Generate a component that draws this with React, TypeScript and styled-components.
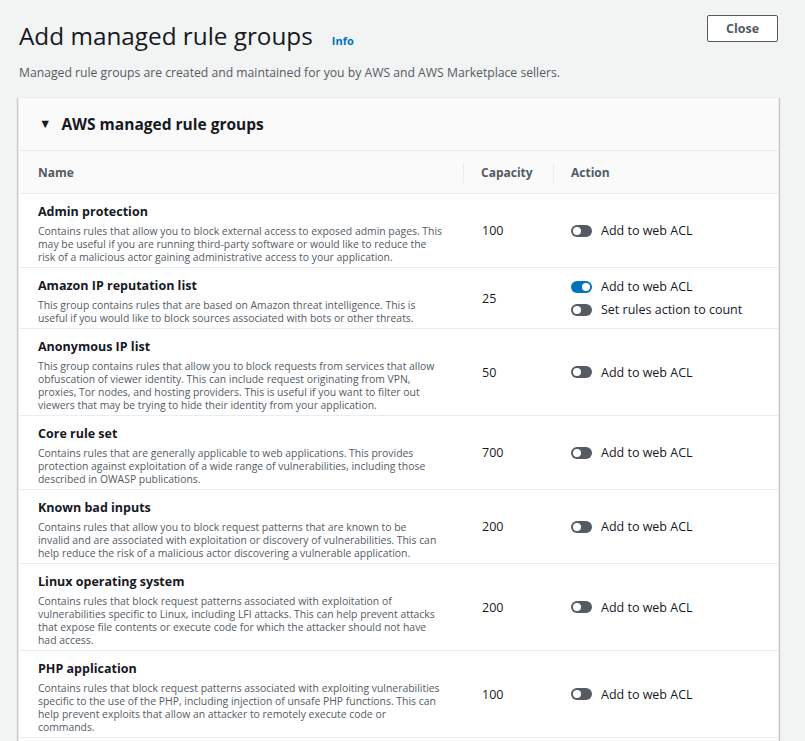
import React from "react";
import styled, { createGlobalStyle } from "styled-components";

const GlobalStyle = createGlobalStyle`
  html, body {
    margin: 0;
    padding: 0;
    background: #f2f3f3;
    font-family: "Open Sans", "Noto Sans", Arial, sans-serif;
    color: #16191f;
  }
  * { box-sizing: border-box; }
`;

const Page = styled.div`
  padding: 15px 26px 0 18px;
  height: 741px;
  overflow: hidden;
`;

const TopBar = styled.div`
  display: flex;
  justify-content: space-between;
  align-items: flex-start;
`;

const TitleWrap = styled.div`
  display: flex;
  align-items: baseline;
  gap: 19px;
  margin-top: 5px;
  padding-left: 1px;
`;

const Title = styled.h1`
  margin: 0;
  font-size: 24.3px;
  line-height: 32px;
  font-weight: 400;
  color: #16191f;
`;

const InfoLink = styled.a`
  font-size: 11px;
  font-weight: 700;
  color: #0073bb;
  text-decoration: none;
`;

const CloseButton = styled.button`
  width: 71px;
  height: 27px;
  margin-right: 1px;
  background: #ffffff;
  border: 1px solid #545b64;
  border-radius: 2px;
  font-family: inherit;
  font-size: 12.5px;
  font-weight: 700;
  color: #545b64;
  cursor: pointer;
`;

const Subtitle = styled.p`
  margin: 12px 0 15px 1px;
  font-size: 12.2px;
  line-height: 18px;
  color: #545b64;
`;

const Container = styled.div`
  background: #ffffff;
  border: 1px solid #eaeded;
  border-bottom: none;
  box-shadow: 0 1px 1px 0 rgba(0, 28, 36, 0.3), 1px 1px 1px 0 rgba(0, 28, 36, 0.15),
    -1px 1px 1px 0 rgba(0, 28, 36, 0.15);
`;

const SectionHeader = styled.div`
  display: flex;
  align-items: center;
  gap: 10px;
  height: 53px;
  padding: 0 20px;
  background: #fafafa;
  border-bottom: 1px solid #eaeded;
`;

const Caret = styled.span`
  font-size: 12.5px;
  line-height: 1;
  color: #16191f;
`;

const SectionTitle = styled.h2`
  margin: 0;
  font-size: 15.5px;
  font-weight: 700;
  color: #16191f;
`;

const Grid = styled.div`
  display: grid;
  grid-template-columns: 444px 90px 1fr;
`;

const HeadCell = styled.div<{ $divider?: boolean }>`
  position: relative;
  height: 43px;
  display: flex;
  align-items: center;
  padding-left: ${(p) => (p.$divider ? "18px" : "19px")};
  background: #fafafa;
  border-bottom: 1px solid #eaeded;
  font-size: 12px;
  font-weight: 700;
  color: #545b64;

  ${(p) =>
    p.$divider &&
    `
    &::before {
      content: "";
      position: absolute;
      left: 0;
      top: 12px;
      bottom: 10px;
      width: 1px;
      background: #eaeded;
    }
  `}
`;

const Cell = styled.div`
  border-bottom: 1px solid #eaeded;
  display: flex;
  align-items: center;
  padding-left: 18px;
`;

const NameCell = styled.div`
  border-bottom: 1px solid #eaeded;
  padding: 9px 0 3px 19px;
`;

const RuleName = styled.div`
  font-size: 12.5px;
  line-height: 18px;
  font-weight: 700;
  color: #16191f;
`;

const RuleDesc = styled.div`
  margin-top: 4px;
  font-size: 10.4px;
  line-height: 13px;
  color: #545b64;
  white-space: nowrap;
`;

const Capacity = styled.span`
  font-size: 12.5px;
  color: #16191f;
  padding-left: 1px;
`;

const Actions = styled.div`
  display: flex;
  flex-direction: column;
  gap: 5px;
`;

const ToggleRow = styled.label`
  display: flex;
  align-items: center;
  gap: 9px;
  height: 18px;
  font-size: 12.5px;
  color: #16191f;
`;

const Track = styled.span<{ $on?: boolean }>`
  position: relative;
  width: 21px;
  height: 12px;
  border-radius: 6px;
  background: ${(p) => (p.$on ? "#0073bb" : "#545b64")};
  flex: none;
`;

const Knob = styled.span<{ $on?: boolean }>`
  position: absolute;
  top: 2px;
  left: ${(p) => (p.$on ? "11px" : "2px")};
  width: 8px;
  height: 8px;
  border-radius: 50%;
  background: #ffffff;
`;

type Toggle = { label: string; on?: boolean };
type Rule = { name: string; lines: string[]; capacity: number; toggles: Toggle[] };

const add: Toggle = { label: "Add to web ACL" };

const rules: Rule[] = [
  {
    name: "Admin protection",
    lines: [
      "Contains rules that allow you to block external access to exposed admin pages. This",
      "may be useful if you are running third-party software or would like to reduce the",
      "risk of a malicious actor gaining administrative access to your application.",
    ],
    capacity: 100,
    toggles: [add],
  },
  {
    name: "Amazon IP reputation list",
    lines: [
      "This group contains rules that are based on Amazon threat intelligence. This is",
      "useful if you would like to block sources associated with bots or other threats.",
    ],
    capacity: 25,
    toggles: [{ label: "Add to web ACL", on: true }, { label: "Set rules action to count" }],
  },
  {
    name: "Anonymous IP list",
    lines: [
      "This group contains rules that allow you to block requests from services that allow",
      "obfuscation of viewer identity. This can include request originating from VPN,",
      "proxies, Tor nodes, and hosting providers. This is useful if you want to filter out",
      "viewers that may be trying to hide their identity from your application.",
    ],
    capacity: 50,
    toggles: [add],
  },
  {
    name: "Core rule set",
    lines: [
      "Contains rules that are generally applicable to web applications. This provides",
      "protection against exploitation of a wide range of vulnerabilities, including those",
      "described in OWASP publications.",
    ],
    capacity: 700,
    toggles: [add],
  },
  {
    name: "Known bad inputs",
    lines: [
      "Contains rules that allow you to block request patterns that are known to be",
      "invalid and are associated with exploitation or discovery of vulnerabilities. This can",
      "help reduce the risk of a malicious actor discovering a vulnerable application.",
    ],
    capacity: 200,
    toggles: [add],
  },
  {
    name: "Linux operating system",
    lines: [
      "Contains rules that block request patterns associated with exploitation of",
      "vulnerabilities specific to Linux, including LFI attacks. This can help prevent attacks",
      "that expose file contents or execute code for which the attacker should not have",
      "had access.",
    ],
    capacity: 200,
    toggles: [add],
  },
  {
    name: "PHP application",
    lines: [
      "Contains rules that block request patterns associated with exploiting vulnerabilities",
      "specific to the use of the PHP, including injection of unsafe PHP functions. This can",
      "help prevent exploits that allow an attacker to remotely execute code or",
      "commands.",
    ],
    capacity: 100,
    toggles: [add],
  },
];

export default function App() {
  return (
    <>
      <GlobalStyle />
      <Page>
        <TopBar>
          <TitleWrap>
            <Title>Add managed rule groups</Title>
            <InfoLink href="#">Info</InfoLink>
          </TitleWrap>
          <CloseButton>Close</CloseButton>
        </TopBar>
        <Subtitle>
          Managed rule groups are created and maintained for you by AWS and AWS Marketplace sellers.
        </Subtitle>
        <Container>
          <SectionHeader>
            <Caret>▼</Caret>
            <SectionTitle>AWS managed rule groups</SectionTitle>
          </SectionHeader>
          <Grid>
            <HeadCell>Name</HeadCell>
            <HeadCell $divider>Capacity</HeadCell>
            <HeadCell $divider>Action</HeadCell>
            {rules.map((r) => (
              <React.Fragment key={r.name}>
                <NameCell>
                  <RuleName>{r.name}</RuleName>
                  <RuleDesc>
                    {r.lines.map((l, i) => (
                      <div key={i}>{l}</div>
                    ))}
                  </RuleDesc>
                </NameCell>
                <Cell>
                  <Capacity>{r.capacity}</Capacity>
                </Cell>
                <Cell>
                  <Actions>
                    {r.toggles.map((t) => (
                      <ToggleRow key={t.label}>
                        <Track $on={t.on}>
                          <Knob $on={t.on} />
                        </Track>
                        {t.label}
                      </ToggleRow>
                    ))}
                  </Actions>
                </Cell>
              </React.Fragment>
            ))}
            <NameCell />
            <Cell />
            <Cell />
          </Grid>
        </Container>
      </Page>
    </>
  );
}
